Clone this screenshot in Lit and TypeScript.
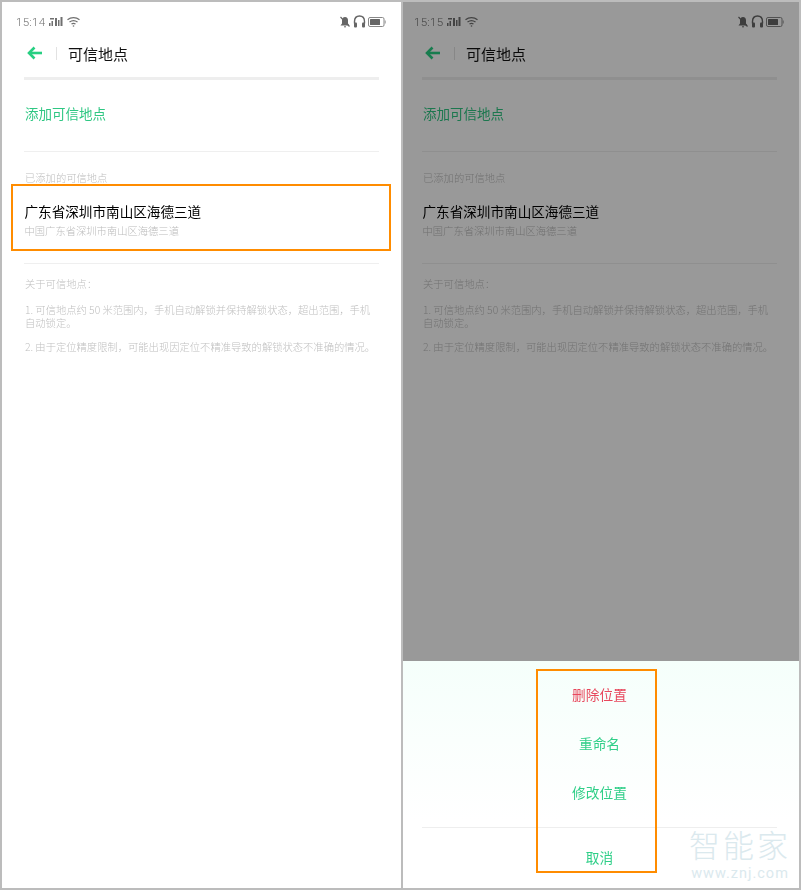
import { LitElement, html, css } from "lit";
import { customElement, property } from "lit/decorators.js";

const FONT = css`"Noto Sans CJK SC", "Noto Sans", sans-serif`;

@customElement("status-bar")
class StatusBar extends LitElement {
  @property() time = "";
  static styles = css`
    :host { display: flex; align-items: center; height: 14px; font-family: "Roboto", sans-serif; font-size: 11.500px; color: #707070; filter: blur(.3px); }
    .time { letter-spacing: .3px; margin-right: 4px; }
    .spacer { flex: 1; }
    svg { display: block; }
    .wifi { margin-left: 4px; }
    .head { margin: 0 2px 0 2px; }
  `;
  render() {
    return html`
      <span class="time">${this.time}</span>
      <svg width="14" height="10" viewBox="0 0 14 10" fill="#707070">
        <rect x="0" y="6" width="1.500" height="3"/><rect x="2.500" y="4" width="1.500" height="5"/>
        <rect x="1" y="1" width="4" height="1.500"/><rect x="6" y="1" width="2" height="8"/>
        <rect x="9" y="3" width="1.500" height="6"/><rect x="11.500" y="0" width="2" height="9"/>
      </svg>
      <svg class="wifi" width="13" height="10" viewBox="0 0 13 10" fill="none" stroke="#707070" stroke-width="1.200">
        <path d="M.5 2.800C4 0 9 0 12.500 2.800"/><path d="M2.500 5C4.800 3.300 8.200 3.300 10.500 5"/><path d="M4.500 7C5.700 6.200 7.300 6.200 8.500 7"/>
        <circle cx="6.500" cy="9" r=".8" fill="#707070" stroke="none"/>
      </svg>
      <span class="spacer"></span>
      <svg width="12" height="12" viewBox="0 0 12 12">
        <path d="M6 1C4 1 3 2.500 3 4.500V7.500L1.500 9.500H10.500L9 7.500V4.500C9 2.500 8 1 6 1Z" fill="#666"/>
        <path d="M5 10.800H7" stroke="#666"/>
        <path d="M1.500 1L10.500 10.500" stroke="#666" stroke-width="1.100"/>
      </svg>
      <svg class="head" width="13" height="14" viewBox="0 0 13 14" fill="none">
        <path d="M1.500 8.500V6.500C1.500 3 3.500 1 6.500 1S11.500 3 11.500 6.500V8.500" stroke="#666" stroke-width="1.400"/>
        <rect x="1" y="7.500" width="3" height="5" rx="1" fill="#666"/><rect x="9" y="7.500" width="3" height="5" rx="1" fill="#666"/>
      </svg>
      <svg width="18" height="10" viewBox="0 0 18 10">
        <rect x=".5" y=".5" width="15.500" height="9" rx="1.500" fill="none" stroke="#888"/>
        <rect x="2" y="2" width="10" height="6" rx=".5" fill="#666"/>
        <rect x="16.700" y="3.500" width="1" height="3" fill="#999"/>
      </svg>`;
  }
}

@customElement("trusted-places")
class TrustedPlaces extends LitElement {
  @property() time = "";
  @property({ type: Boolean }) marked = false;
  static styles = css`
    :host { display: block; font-family: ${FONT}; font-weight: 300; }
    status-bar { margin: 13px -7px 0 -8px; }
    .header { display: flex; align-items: center; height: 32px; margin-top: 8px; padding-left: 3px; }
    .back { display: block; margin-right: 13px; }
    .sep { width: 1px; height: 13px; background: #e2e2e2; margin-right: 11px; }
    .title { font-size: 15px; color: #111; font-weight: 400; filter: blur(.3px); }
    .thick { height: 3px; background: #eeeeee; margin-top: 8px; }
    .add { display: flex; align-items: center; height: 71px; padding: 0 0 6px 1px; box-sizing: border-box; font-size: 13.500px; color: #2fc783; font-weight: 400; }
    .add span, .label span, .addr, .sub, .about p { filter: blur(.3px); }
    .thin { height: 1px; background: #efefef; }
    .label { display: flex; align-items: center; height: 32px; padding: 18px 0 0 1px; box-sizing: border-box; font-size: 10.300px; color: #bdbdbd; }
    .row { display: flex; flex-direction: column; height: 67px; margin: 0 -12px 0 -13px; padding: 15px 12px 0 14px; box-sizing: border-box; border: 2.500px solid transparent; }
    .row.marked { border-color: #ff8c00; }
    .addr { font-size: 13.600px; line-height: 20px; color: #000; font-weight: 400; margin-left: -2.500px; }
    .sub { font-size: 10.300px; line-height: 14px; margin-top: 3px; color: #bbbbbb; margin-left: -2.500px; }
    .rule2 { margin-top: 12px; }
    .about { font-size: 10.300px; line-height: 13px; color: #c0c0c0; padding-left: 1px; }
    .about p { margin: 0 0 11px; }
    .about .lead { margin: 13px 0 13px; }
  `;
  render() {
    return html`
      <status-bar .time=${this.time}></status-bar>
      <div class="header">
        <svg class="back" width="16" height="14" viewBox="0 0 16 14" fill="none" stroke="#27cf82" stroke-width="2.600">
          <path d="M15 7H3"/><path d="M7.500 1.500L2 7L7.500 12.500"/>
        </svg>
        <span class="sep"></span>
        <span class="title">可信地点</span>
      </div>
      <div class="thick"></div>
      <div class="add"><span>添加可信地点</span></div>
      <div class="thin"></div>
      <div class="label"><span>已添加的可信地点</span></div>
      <div class="row ${this.marked ? "marked" : ""}">
        <span class="addr">广东省深圳市南山区海德三道</span>
        <span class="sub">中国广东省深圳市南山区海德三道</span>
      </div>
      <div class="thin rule2"></div>
      <div class="about">
        <p class="lead">关于可信地点：</p>
        <p>1. 可信地点约 50 米范围内，手机自动解锁并保持解锁状态，超出范围，手机自动锁定。</p>
        <p>2. 由于定位精度限制，可能出现因定位不精准导致的解锁状态不准确的情况。</p>
      </div>`;
  }
}

@customElement("app-root")
export class AppRoot extends LitElement {
  static styles = css`
    :host { display: flex; width: 801px; height: 890px; box-sizing: border-box; padding: 2px; gap: 2px; background: #bcbcbc; font-family: ${FONT}; }
    .left { width: 399px; padding: 0 22px 0 22px; box-sizing: border-box; background: #fff; }
    .right { position: relative; flex: 1; background: #fff; overflow: hidden; display: flex; flex-direction: column; }
    .page { position: relative; flex: 1; padding: 0 22px 0 19px; overflow: hidden; }
    .scrim { position: absolute; inset: 0; background: rgba(0, 0, 0, .4); }
    .sheet { position: relative; height: 227px; flex: none; padding: 0 22px 0 19px; background: linear-gradient(#f5fffb, #ffffff 70%); font-size: 13.700px; color: #2fcf88; text-align: center; display: flex; flex-direction: column; }
    .opt { height: 49px; display: flex; align-items: center; justify-content: center; }
    .opt span, .cancel span { filter: blur(.3px); }
    .opt.first { margin-top: 8px; }
    .danger { color: #e8485d; }
    .rule { height: 1px; background: #eeeeee; margin-top: 11px; }
    .cancel { height: 60px; padding-bottom: 2px; box-sizing: border-box; display: flex; align-items: center; justify-content: center; }
    .mark { position: absolute; left: 133px; top: 8px; width: 121px; height: 204px; box-sizing: border-box; border: 2.500px solid #ff8c00; }
    .wm { position: absolute; right: 8px; bottom: 7px; color: #dbe9ee; text-align: center; line-height: 1; }
    .wm .cn { font-size: 31px; letter-spacing: 3px; font-weight: 300; }
    .wm .en { font-family: "Roboto", sans-serif; font-size: 14.500px; letter-spacing: 1px; margin-top: 8px; }
  `;
  render() {
    return html`
      <div class="left"><trusted-places time="15:14" marked></trusted-places></div>
      <div class="right">
        <div class="page">
          <trusted-places time="15:15"></trusted-places>
          <div class="scrim"></div>
        </div>
        <div class="sheet">
          <div class="opt first danger"><span>删除位置</span></div>
          <div class="opt"><span>重命名</span></div>
          <div class="opt"><span>修改位置</span></div>
          <div class="rule"></div>
          <div class="cancel"><span>取消</span></div>
          <div class="wm"><div class="cn">智能家</div><div class="en">www.znj.com</div></div>
          <div class="mark"></div>
        </div>
      </div>`;
  }
}
